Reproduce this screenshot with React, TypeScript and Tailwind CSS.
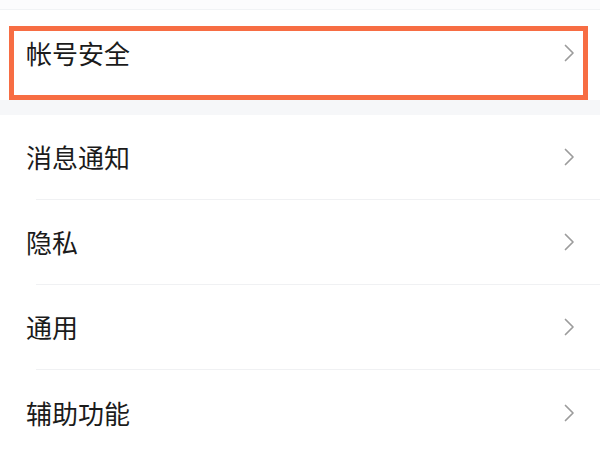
import React from "react";

const items = ["消息通知", "隐私", "通用", "辅助功能"];

const Chevron = () => (
  <svg width="11" height="18" viewBox="0 0 11 18" fill="none" className="shrink-0">
    <path d="M1.5 1.5 L9 9 L1.5 16.5" stroke="#9c9c9c" strokeWidth="1.7" strokeLinecap="round" strokeLinejoin="round" />
  </svg>
);

export default function App() {
  return (
    <div
      className="w-[600px] h-[450px] overflow-hidden bg-white text-[#1b1b1b]"
      style={{ fontFamily: '"Noto Sans CJK SC", "Noto Sans", sans-serif' }}
    >
      {/* top edge of previous card */}
      <div className="h-[10px] bg-[#fcfcfd] border-b border-[#f1f3f5]" />

      {/* highlighted row */}
      <div className="relative h-[90px] bg-white">
        <div className="flex items-center justify-between pl-[26px] pr-[25px] h-[86px]">
          <span className="text-[26px] leading-none">帐号安全</span>
          <Chevron />
        </div>
        <div className="absolute left-[9px] top-[16px] w-[579px] h-[74px] border-[5px] border-[#f76d43]" />
      </div>

      {/* section gap */}
      <div className="h-[15px] bg-[#f6f7f9]" />

      {/* settings list */}
      <div className="flex flex-col">
        {items.map((label, i) => (
          <div key={label} className="h-[85px] flex flex-col">
            <div className="flex-1 flex items-center justify-between pl-[26px] pr-[25px]">
              <span className="text-[26px] leading-none">{label}</span>
              <Chevron />
            </div>
            {i < items.length - 1 && <div className="ml-[36px] h-px bg-[#f0f1f3]" />}
          </div>
        ))}
      </div>
    </div>
  );
}
